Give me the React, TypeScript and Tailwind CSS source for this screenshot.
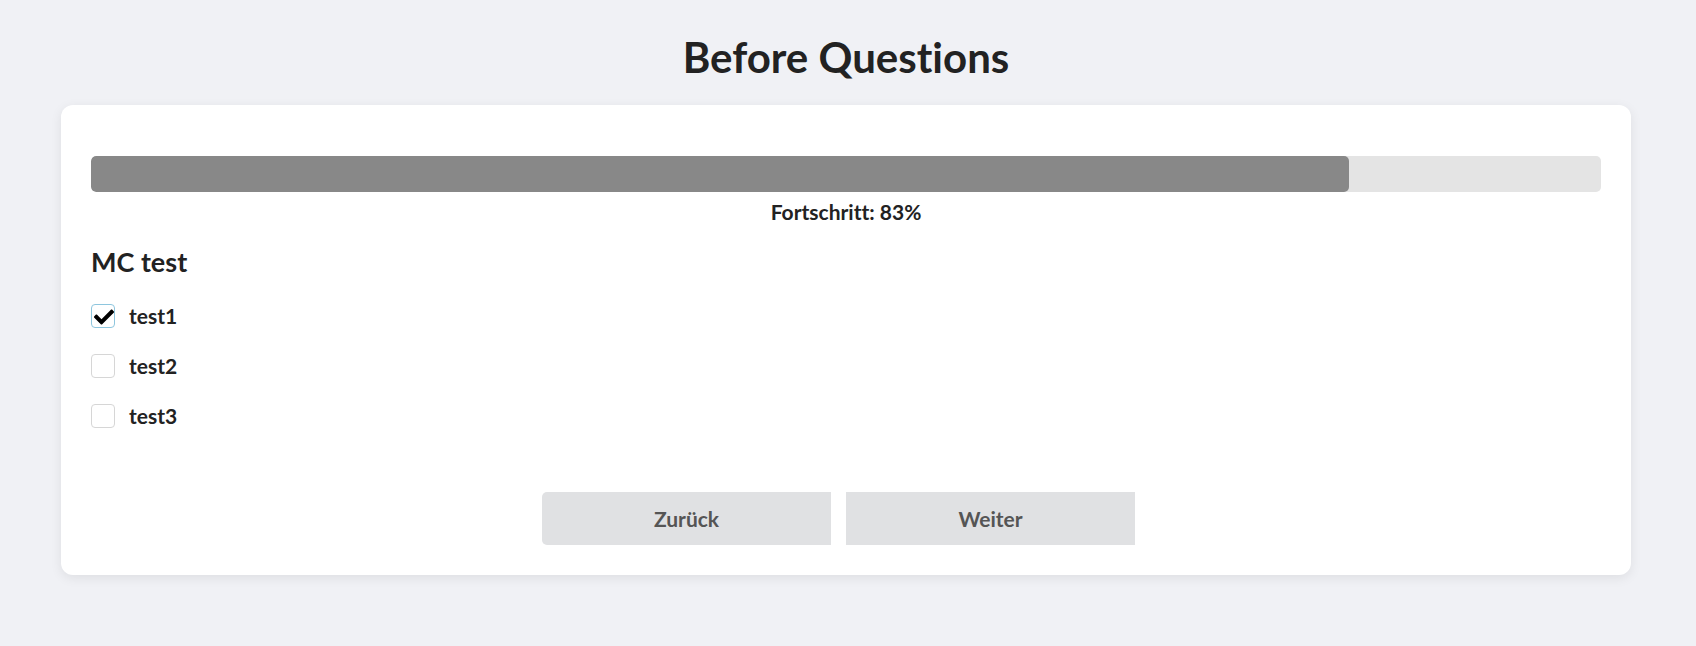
import { useState } from 'react';

const options = ['test1', 'test2', 'test3'];

function CheckMark() {
  return (
    <svg viewBox="0 0 512 512" className="h-[20px] w-[20px]" fill="currentColor">
      <path d="M173.9 439.4l-166.4-166.4c-10-10-10-26.2 0-36.2l36.2-36.2c10-10 26.2-10 36.2 0L192 312.7 432.1 72.6c10-10 26.2-10 36.2 0l36.2 36.2c10 10 10 26.2 0 36.2l-294.4 294.4c-10 10-26.2 10-36.2 0z" />
    </svg>
  );
}

export default function App() {
  const [checked, setChecked] = useState<string[]>(['test1']);
  const progress = 83.33;

  const toggle = (opt: string) => {
    setChecked(prev => (prev.includes(opt) ? prev.filter(o => o !== opt) : [...prev, opt]));
  };

  return (
    <div
      className="min-h-screen bg-[#f0f1f5] pt-[35px] text-[#222222] [font-variant-ligatures:none]"
      style={{ fontFamily: 'Lato, "Noto Sans", sans-serif' }}
    >
      <div className="w-[1692px]">
        {/* Header */}
        <h1 className="text-center text-[42px] font-bold leading-[44px]">Before Questions</h1>

        {/* Card */}
        <div className="mx-auto mt-[26px] w-[1570px] rounded-xl bg-white px-[30px] pt-[51px] pb-[30px] shadow-[0_3px_12px_rgba(0,0,0,0.08)]">
          <div className="h-[36px] w-full overflow-hidden rounded-[5px] bg-[#e4e4e4]">
            <div className="h-full rounded-[5px] bg-[#888888]" style={{ width: `${progress}%` }} />
          </div>
          <p className="mt-[8px] text-center text-[21px] font-bold leading-[24px]">Fortschritt: 83%</p>

          <h2 className="mt-[22px] text-[27px] font-bold leading-[32px]">MC test</h2>

          <div className="mt-[26px] flex flex-col gap-[26px]">
            {options.map(opt => {
              const isOn = checked.includes(opt);
              return (
                <label key={opt} className="flex h-[24px] cursor-pointer items-center gap-[14px]">
                  <span
                    onClick={() => toggle(opt)}
                    className={
                      isOn
                        ? 'flex h-[24px] w-[24px] items-center justify-center rounded-[4px] border border-[#8ec6de] pt-[1px] pl-[1px] text-black'
                        : 'flex h-[24px] w-[24px] items-center justify-center rounded-[4px] border border-[#d6d6d6]'
                    }
                  >
                    {isOn && <CheckMark />}
                  </span>
                  <span className="text-[21px] font-bold">{opt}</span>
                </label>
              );
            })}
          </div>

          {/* Nav buttons */}
          <div className="mt-[64px] flex justify-center">
            <button className="mr-[15px] h-[53px] w-[289px] rounded-l-[5px] bg-[#e0e1e3] text-[21px] font-bold text-[#555555]">
              Zurück
            </button>
            <button className="mr-[15px] h-[53px] w-[289px] bg-[#e0e1e3] text-[21px] font-bold text-[#555555]">
              Weiter
            </button>
          </div>
        </div>
      </div>
    </div>
  );
}
